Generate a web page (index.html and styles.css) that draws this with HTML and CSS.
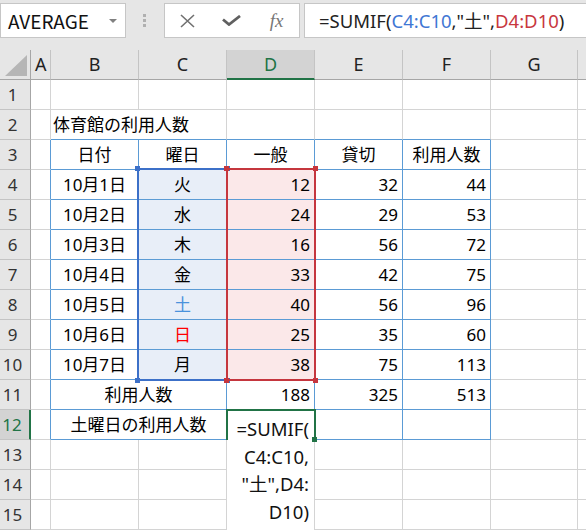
FILE: index.html
```html
<!DOCTYPE html>
<html lang="ja">
<head>
    <meta charset="UTF-8">
    <title>SUMIF</title>
    <link rel="stylesheet" href="styles.css">
</head>
<body>
<div class="app">

<!-- Formula bar -->
<div class="bar">
    <div class="namebox"><span>AVERAGE</span><span class="caret"></span></div>
    <div class="grip">
        <svg width="4" height="14" viewBox="0 0 4 14"><rect x="0" y="0" width="3" height="3" fill="#b0b0b0"/><rect x="0" y="5" width="3" height="3" fill="#b0b0b0"/><rect x="0" y="10" width="3" height="3" fill="#b0b0b0"/></svg>
    </div>
    <div class="fxbox">
        <span><svg width="15" height="14" viewBox="0 0 15 14"><path d="M1 1 L14 13 M14 1 L1 13" stroke="#707070" stroke-width="1.6" fill="none"/></svg></span>
        <span><svg width="19" height="11" viewBox="0 0 19 11"><path d="M1 4.5 L7 9.5 L18 1" stroke="#606060" stroke-width="2.8" fill="none"/></svg></span>
        <span class="fx">fx</span>
    </div>
    <div class="formula">=SUMIF(<span class="ref-b">C4:C10</span>,"土",<span class="ref-r">D4:D10</span>)</div>
</div>

<!-- Sheet -->
<div class="sheet">
    <div class="cells">
        <!-- column headers -->
        <div class="c corner"><svg width="30" height="29" viewBox="0 0 30 29"><polygon points="5,26 27,26 27,5" fill="#b6b6b6"/></svg></div>
        <div class="c ch">A</div>
        <div class="c ch">B</div>
        <div class="c ch">C</div>
        <div class="c ch sel">D</div>
        <div class="c ch">E</div>
        <div class="c ch">F</div>
        <div class="c ch">G</div>
        <div class="c ch"></div>

        <!-- 1 -->
        <div class="c rh">1</div>
        <div class="c"></div><div class="c"></div><div class="c"></div><div class="c"></div>
        <div class="c"></div><div class="c"></div><div class="c"></div><div class="c"></div>

        <!-- 2 -->
        <div class="c rh">2</div>
        <div class="c"></div>
        <div class="c tt m2 title">体育館の利用人数</div>
        <div class="c tt"></div><div class="c tt"></div><div class="c tt"></div>
        <div class="c"></div><div class="c"></div>

        <!-- 3 -->
        <div class="c rh">3</div>
        <div class="c tl"></div>
        <div class="c t ctr">日付</div>
        <div class="c t ctr">曜日</div>
        <div class="c t ctr">一般</div>
        <div class="c t ctr">貸切</div>
        <div class="c t ctr">利用人数</div>
        <div class="c"></div><div class="c"></div>

        <!-- 4 -->
        <div class="c rh">4</div>
        <div class="c tl"></div>
        <div class="c t ctr">10月1日</div>
        <div class="c t ctr bc">火</div>
        <div class="c t num rc">12</div>
        <div class="c t num">32</div>
        <div class="c t num">44</div>
        <div class="c"></div><div class="c"></div>

        <!-- 5 -->
        <div class="c rh">5</div>
        <div class="c tl"></div>
        <div class="c t ctr">10月2日</div>
        <div class="c t ctr bc">水</div>
        <div class="c t num rc">24</div>
        <div class="c t num">29</div>
        <div class="c t num">53</div>
        <div class="c"></div><div class="c"></div>

        <!-- 6 -->
        <div class="c rh">6</div>
        <div class="c tl"></div>
        <div class="c t ctr">10月3日</div>
        <div class="c t ctr bc">木</div>
        <div class="c t num rc">16</div>
        <div class="c t num">56</div>
        <div class="c t num">72</div>
        <div class="c"></div><div class="c"></div>

        <!-- 7 -->
        <div class="c rh">7</div>
        <div class="c tl"></div>
        <div class="c t ctr">10月4日</div>
        <div class="c t ctr bc">金</div>
        <div class="c t num rc">33</div>
        <div class="c t num">42</div>
        <div class="c t num">75</div>
        <div class="c"></div><div class="c"></div>

        <!-- 8 -->
        <div class="c rh">8</div>
        <div class="c tl"></div>
        <div class="c t ctr">10月5日</div>
        <div class="c t ctr bc sat">土</div>
        <div class="c t num rc">40</div>
        <div class="c t num">56</div>
        <div class="c t num">96</div>
        <div class="c"></div><div class="c"></div>

        <!-- 9 -->
        <div class="c rh">9</div>
        <div class="c tl"></div>
        <div class="c t ctr">10月6日</div>
        <div class="c t ctr bc sun">日</div>
        <div class="c t num rc">25</div>
        <div class="c t num">35</div>
        <div class="c t num">60</div>
        <div class="c"></div><div class="c"></div>

        <!-- 10 -->
        <div class="c rh">10</div>
        <div class="c tl"></div>
        <div class="c t ctr">10月7日</div>
        <div class="c t ctr bc">月</div>
        <div class="c t num rc">38</div>
        <div class="c t num">75</div>
        <div class="c t num">113</div>
        <div class="c"></div><div class="c"></div>

        <!-- 11 -->
        <div class="c rh">11</div>
        <div class="c tl"></div>
        <div class="c t ctr m2">利用人数</div>
        <div class="c t num">188</div>
        <div class="c t num">325</div>
        <div class="c t num">513</div>
        <div class="c"></div><div class="c"></div>

        <!-- 12 -->
        <div class="c rh sel">12</div>
        <div class="c tl"></div>
        <div class="c t ctr m2">土曜日の利用人数</div>
        <div class="c t"></div>
        <div class="c t"></div>
        <div class="c t"></div>
        <div class="c"></div><div class="c"></div>

        <!-- 13 -->
        <div class="c rh">13</div>
        <div class="c"></div><div class="c"></div><div class="c"></div><div class="c"></div>
        <div class="c"></div><div class="c"></div><div class="c"></div><div class="c"></div>

        <!-- 14 -->
        <div class="c rh">14</div>
        <div class="c"></div><div class="c"></div><div class="c"></div><div class="c"></div>
        <div class="c"></div><div class="c"></div><div class="c"></div><div class="c"></div>

        <!-- 15 -->
        <div class="c rh">15</div>
        <div class="c"></div><div class="c"></div><div class="c"></div><div class="c"></div>
        <div class="c"></div><div class="c"></div><div class="c"></div><div class="c"></div>
    </div>

    <!-- range highlights and the cell being edited -->
    <div class="marks">
        <div class="rng blue"><i class="h1"></i><i class="h2"></i><i class="h3"></i><i class="h4"></i></div>
        <div class="rng red"><i class="h1"></i><i class="h2"></i><i class="h3"></i><i class="h4"></i></div>
        <div class="edit">=SUMIF(
C4:C10,
"土",D4:
D10)</div>
        <div class="active"><i></i></div>
    </div>
</div>

</div>
</body>
</html>
```

FILE: styles.css
```css
/* General */
body {
    margin: 0;
    font-family: "Noto Sans", "Noto Sans CJK JP", sans-serif;
    color: #000;
    background: #fff;
}

.app {
    width: 586px;
    height: 530px;
    overflow: hidden;
}

/* Formula bar */
.bar {
    display: flex;
    align-items: flex-start;
    height: 50px;
    padding-top: 3px;
    box-sizing: border-box;
    background: #e6e6e6;
}

.namebox {
    width: 126px;
    height: 35px;
    box-sizing: border-box;
    border: 1px solid #c6c6c6;
    background: #fff;
    display: flex;
    align-items: center;
    padding: 0 8px 0 7px;
    font-family: "Noto Sans CJK JP", sans-serif;
    font-size: 19px;
    color: #111;
}

.caret {
    margin-left: auto;
    border-left: 4px solid transparent;
    border-right: 4px solid transparent;
    border-top: 4px solid #808080;
}

.grip {
    width: 38px;
    height: 35px;
    display: flex;
    align-items: center;
    justify-content: center;
}

.fxbox {
    width: 136px;
    height: 35px;
    box-sizing: border-box;
    border: 1px solid #c6c6c6;
    background: #fff;
    display: grid;
    grid-template-columns: repeat(3, 1fr);
    align-items: center;
    justify-items: center;
}

.fxbox span {
    display: flex;
}

.fx {
    font-family: "Liberation Serif", serif;
    font-style: italic;
    font-size: 19px;
    color: #777;
}

.formula {
    flex: 1;
    height: 35px;
    box-sizing: border-box;
    margin-left: 4px;
    border: 1px solid #c6c6c6;
    border-right: none;
    background: #fff;
    padding-left: 14px;
    font-size: 18.5px;
    line-height: 33px;
    color: #222;
    white-space: nowrap;
}

.ref-b { color: #3f77d4; }
.ref-r { color: #c8373e; }

/* Sheet */
.sheet {
    display: grid;
}

.cells,
.marks {
    grid-area: 1 / 1;
    display: grid;
    grid-template-columns: 31px 20px 88px 88px 88px 88px 88px 87px 1fr;
    grid-template-rows: repeat(16, 30px);
}

.c {
    box-sizing: border-box;
    border-right: 1px solid #d4d4d4;
    border-bottom: 1px solid #d4d4d4;
    padding: 0 4px;
    font-size: 17px;
    line-height: 29px;
    white-space: nowrap;
}

.corner {
    padding: 0;
    background: #e6e6e6;
    border-right-color: #a6a6a6;
    border-bottom-color: #a6a6a6;
}

.corner svg {
    display: block;
}

.ch {
    background: #e6e6e6;
    border-right-color: #c4c4c4;
    border-bottom-color: #a6a6a6;
    text-align: center;
    font-size: 18px;
    color: #222;
}

.ch.sel {
    background: #d3d3d3;
    color: #217346;
    border-bottom: 2px solid #217346;
}

.rh {
    background: #e6e6e6;
    border-right-color: #a6a6a6;
    border-bottom-color: #c4c4c4;
    text-align: center;
    padding: 0 5px 0 0;
    font-size: 17px;
    color: #333;
}

.rh.sel {
    background: #d3d3d3;
    color: #217346;
    border-right: 2px solid #217346;
}

/* Table borders */
.t {
    border-right-color: #5b9bd5;
    border-bottom-color: #5b9bd5;
}

.tl { border-right-color: #5b9bd5; }
.tt { border-bottom-color: #5b9bd5; }

.m2 { grid-column: span 2; }

.title { padding-left: 2px; }
.ctr { text-align: center; }
.num { text-align: right; }

.bc { background: #e8eef8; }
.rc { background: #fbe8e9; }

.sat { color: #4a92dc; }
.sun { color: #ff0000; }

/* Range highlights */
.marks {
    pointer-events: none;
}

.rng {
    position: relative;
    border: 2px solid;
    margin: -2px -1px -1px -2px;
}

.rng.blue {
    grid-column: 4;
    grid-row: 5 / 12;
    border-color: #3c70c8;
}

.rng.red {
    grid-column: 5;
    grid-row: 5 / 12;
    border-color: #c5363e;
    margin-left: -1px;
}

.rng i {
    position: absolute;
    width: 5px;
    height: 5px;
}

.rng.blue i { background: #3c70c8; }
.rng.red i { background: #c5363e; }

.rng .h1 { left: -4px; top: -4px; }
.rng .h2 { right: -4px; top: -4px; }
.rng .h3 { left: -4px; bottom: -4px; }
.rng .h4 { right: -4px; bottom: -4px; }

/* Cell in edit mode */
.edit {
    grid-column: 5;
    grid-row: 13 / 17;
    margin-right: 1px;
    background: #fff;
    padding: 5px 5px 0 0;
    text-align: right;
    font-size: 18.5px;
    line-height: 27.5px;
    white-space: pre;
    color: #111;
}

.active {
    grid-column: 5;
    grid-row: 13;
    position: relative;
    margin: -1px -1px 0 -1px;
    border: 2px solid #217346;
    border-bottom: none;
}

.active i {
    position: absolute;
    right: -3px;
    bottom: -2px;
    width: 5px;
    height: 5px;
    background: #217346;
}
```
